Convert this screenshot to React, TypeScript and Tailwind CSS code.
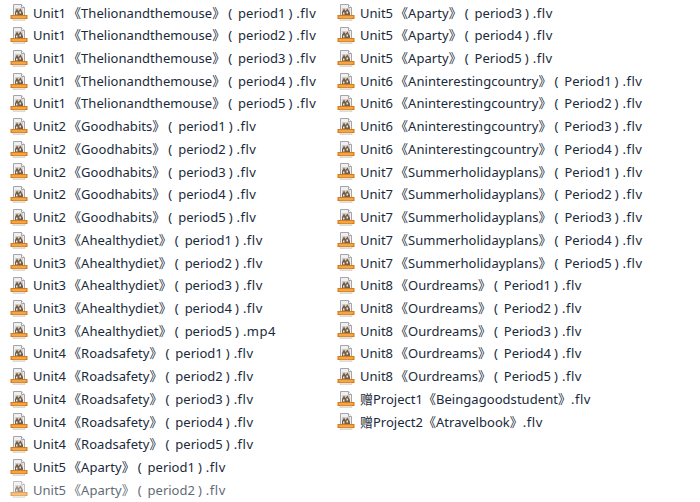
type Item = { u: string; t: string; w?: string; n?: number; ext?: string };
const range = (u: string, t: string, w: string, ns: number[], ext = ".flv"): Item[] => ns.map((n) => ({ u, t, w, n, ext }));
const a = [1,2,3,4,5];
const left: Item[] = [
  ...range("Unit1","Thelionandthemouse","period",a),
  ...range("Unit2","Goodhabits","period",a),
  ...range("Unit3","Ahealthydiet","period",[1,2,3,4]),
  ...range("Unit3","Ahealthydiet","period",[5],".mp4"),
  ...range("Unit4","Roadsafety","period",a),
  ...range("Unit5","Aparty","period",[1,2]),
];
const right: Item[] = [
  ...range("Unit5","Aparty","period",[3,4]),
  ...range("Unit5","Aparty","Period",[5]),
  ...range("Unit6","Aninterestingcountry","Period",[1,2,3,4]),
  ...range("Unit7","Summerholidayplans","Period",a),
  ...range("Unit8","Ourdreams","Period",a),
  { u: "赠Project1", t: "Beingagoodstudent", ext: ".flv" },
  { u: "赠Project2", t: "Atravelbook", ext: ".flv" },
];
function Icon() {
  return (
    <svg width="18" height="18" viewBox="0 0 18 18" className="shrink-0">
      <path d="M3.5 0.5H11.5L14.5 3.5V12H3.5Z" fill="#f0f0f2" stroke="#a4a4ac" />
      <path d="M11.5 0.5V3.5H14.5" fill="#fff" stroke="#a4a4ac" />
      <rect x="5" y="4" width="8" height="7.5" fill="#d8cfc0" />
      <path d="M5 8L7 4.5L8.5 7L10.5 4.5L13 9V11.5H5Z" fill="#6f5f50" />
      <path d="M6 8.5h1.5v2H6ZM9.5 7.5h1.5v2H9.5Z" fill="#efe6d4" />
      <rect x="1" y="11.5" width="16" height="3" fill="#ee9226" stroke="#d97a18" />
      <rect x="2" y="12.5" width="14" height="1" fill="#fbb95a" />
      <path d="M3 15H15V16.5H3Z" fill="#f3efe4" stroke="#c4bfb2" strokeWidth="0.5" />
    </svg>
  );
}
function Row({ item, fade }: { item: Item; fade?: boolean }) {
  const { u, t, w, n, ext } = item;
  return (
    <div className={`flex h-[22.72px] items-center whitespace-pre ${fade ? "opacity-70" : ""}`}>
      <Icon />
      <span className="ml-[5px]">{u}</span>
      <span className={w ? "ml-[2px]" : ""}>《</span>
      <span className="tracking-[0.05px]">{t}</span>
      <span>》</span>
      {w && (
        <>
          <span className="ml-[3px]">(</span>
          <span className="ml-[6px]">{w}{n}</span>
          <span className="ml-[3px]">)</span>
          <span className="ml-[4px] tracking-[0.5px]">{ext}</span>
        </>
      )}
      {!w && <span className="tracking-[0.5px]">{ext}</span>}
    </div>
  );
}
export default function App() {
  return (
    <div className="flex h-[502px] w-[700px] overflow-hidden bg-white pt-[2px] text-[13px] text-[#1a2a3a] [font-family:'Noto_Sans','Noto_Sans_CJK_SC',sans-serif]">
      <div className="w-[327px] shrink-0 pl-[10px]">
        {left.map((t, i) => <Row key={i} item={t} fade={i === left.length - 1} />)}
      </div>
      <div className="pl-[10px]">
        {right.map((t, i) => <Row key={i} item={t} />)}
      </div>
    </div>
  );
}
